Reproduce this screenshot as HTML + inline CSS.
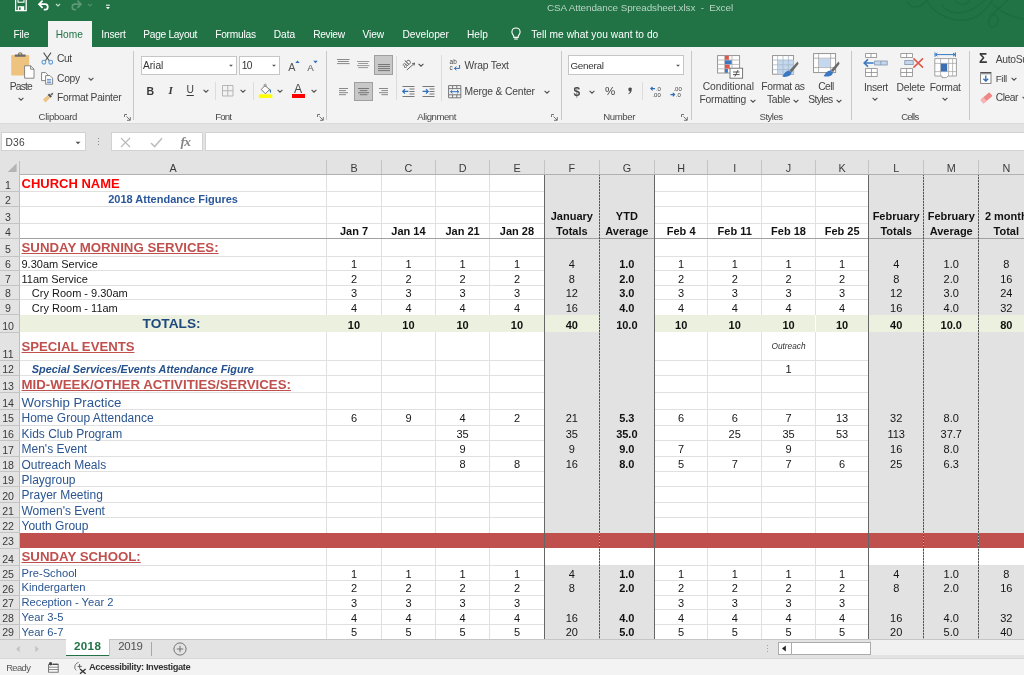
<!DOCTYPE html>
<html><head><meta charset="utf-8"><title>CSA Attendance Spreadsheet.xlsx - Excel</title>
<style>
html,body{margin:0;padding:0;}
body{width:1024px;height:675px;overflow:hidden;position:relative;background:#e3e3e3;font-family:"Liberation Sans",sans-serif;}
#grid div,#hdrs div,#hdrs svg,#cells div{position:absolute;}
#grid,#hdrs,#cells{position:absolute;left:0;top:0;width:1024px;height:675px;overflow:hidden;}
.ch{text-align:center;font-size:10.8px;color:#3a3a3a;padding-top:1px;}
.rh{font-size:10.6px;color:#3a3a3a;display:flex;align-items:flex-end;justify-content:center;}
.rh span{line-height:13px;margin-bottom:-0.5px;}
.c{font-size:11px;color:#151515;white-space:nowrap;display:flex;align-items:flex-end;box-sizing:border-box;padding:0 2px;}
.c span{display:block;width:100%;line-height:1.15;margin-bottom:0.5px;}
.c.b{font-weight:bold;color:#111;}
.c.i{font-style:italic;}
.c.two span{line-height:14.8px;margin-bottom:0;}
#top,#bottom{position:absolute;left:0;top:0;width:1024px;height:675px;overflow:hidden;pointer-events:none;}
#top div,#top svg,#bottom div,#bottom svg{position:absolute;}
.t{white-space:nowrap;}

#cells,#hdrs,#top,#bottom{will-change:transform;}

</style></head>
<body>
<div id="top">
<div style="left:0.00px;top:0.00px;width:1024.00px;height:46.60px;background:#217346;"></div>
<svg style="left:900.00px;top:0.00px;" width="124" height="47" viewBox="0 0 124 47"><g fill="none" stroke="#1d6a3f" stroke-width="1.5" opacity="0.85"><path d="M7.5 1.3 C9 8 20 10 26.5 0"/><path d="M26.5 0 C32 12 48 20 62 20.3 S86 10 92.5 0"/><path d="M41.7 4 C46 14 62 16 74.8 7.6 S82 2 85 0"/><path d="M107.8 0 C100 8 88 16 88.7 22 S95 29 97.6 23 S95 14 90 14"/><path d="M92.5 4 C100 12 112 17 124 19"/><path d="M55 0 C58 6 66 6 70 0"/></g></svg>
<div class="t" style="white-space:pre;left:547.00px;top:1.66px;font-size:9.9px;line-height:11.88px;letter-spacing:-0.068px;color:#b9d5c4;">CSA Attendance Spreadsheet.xlsx  -  Excel</div>
<div style="left:47.50px;top:21.20px;width:44.40px;height:25.60px;background:#f3f3f3;"></div>
<div class="t" style="white-space:pre;left:13.50px;top:28.88px;font-size:10.2px;line-height:12.24px;letter-spacing:-0.184px;color:#fff;">File</div>
<div class="t" style="white-space:pre;left:101.30px;top:28.88px;font-size:10.2px;line-height:12.24px;letter-spacing:-0.201px;color:#fff;">Insert</div>
<div class="t" style="white-space:pre;left:143.30px;top:28.88px;font-size:10.2px;line-height:12.24px;letter-spacing:-0.307px;color:#fff;">Page Layout</div>
<div class="t" style="white-space:pre;left:215.20px;top:28.88px;font-size:10.2px;line-height:12.24px;letter-spacing:-0.238px;color:#fff;">Formulas</div>
<div class="t" style="white-space:pre;left:273.80px;top:28.88px;font-size:10.2px;line-height:12.24px;letter-spacing:-0.086px;color:#fff;">Data</div>
<div class="t" style="white-space:pre;left:313.20px;top:28.88px;font-size:10.2px;line-height:12.24px;letter-spacing:-0.307px;color:#fff;">Review</div>
<div class="t" style="white-space:pre;left:362.50px;top:28.88px;font-size:10.2px;line-height:12.24px;letter-spacing:-0.106px;color:#fff;">View</div>
<div class="t" style="white-space:pre;left:402.40px;top:28.88px;font-size:10.2px;line-height:12.24px;letter-spacing:0.012px;color:#fff;">Developer</div>
<div class="t" style="white-space:pre;left:467.00px;top:28.88px;font-size:10.2px;line-height:12.24px;letter-spacing:-0.044px;color:#fff;">Help</div>
<div class="t" style="white-space:pre;left:531.20px;top:28.88px;font-size:10.2px;line-height:12.24px;letter-spacing:0.053px;color:#fff;">Tell me what you want to do</div>
<div class="t" style="white-space:pre;left:55.80px;top:28.88px;font-size:10.2px;line-height:12.24px;letter-spacing:-0.052px;color:#217346;">Home</div>
<div style="left:0.00px;top:46.60px;width:1024.00px;height:76.60px;background:#f3f3f3;"></div>
<div style="left:0.00px;top:123.20px;width:1024.00px;height:1.00px;background:#dadada;"></div>
<div style="left:133.30px;top:50.50px;width:1.00px;height:69.00px;background:#c8c8c8;"></div>
<div style="left:326.30px;top:50.50px;width:1.00px;height:69.00px;background:#c8c8c8;"></div>
<div style="left:560.50px;top:50.50px;width:1.00px;height:69.00px;background:#c8c8c8;"></div>
<div style="left:690.60px;top:50.50px;width:1.00px;height:69.00px;background:#c8c8c8;"></div>
<div style="left:851.00px;top:50.50px;width:1.00px;height:69.00px;background:#c8c8c8;"></div>
<div style="left:968.90px;top:50.50px;width:1.00px;height:69.00px;background:#c8c8c8;"></div>
<div style="left:215.20px;top:82.00px;width:1.00px;height:18.00px;background:#dcdcdc;"></div>
<div style="left:252.50px;top:82.00px;width:1.00px;height:18.00px;background:#dcdcdc;"></div>
<div style="left:395.70px;top:56.00px;width:1.00px;height:44.00px;background:#dcdcdc;"></div>
<div style="left:440.80px;top:55.00px;width:1.00px;height:46.00px;background:#dcdcdc;"></div>
<div style="left:642.30px;top:82.00px;width:1.00px;height:18.00px;background:#dcdcdc;"></div>
<div class="t" style="white-space:pre;left:38.60px;top:111.34px;font-size:9.6px;line-height:11.52px;letter-spacing:-0.276px;color:#4a4a4a;">Clipboard</div>
<div class="t" style="white-space:pre;left:215.20px;top:111.34px;font-size:9.6px;line-height:11.52px;letter-spacing:-0.802px;color:#4a4a4a;">Font</div>
<div class="t" style="white-space:pre;left:417.30px;top:111.34px;font-size:9.6px;line-height:11.52px;letter-spacing:-0.443px;color:#4a4a4a;">Alignment</div>
<div class="t" style="white-space:pre;left:603.30px;top:111.34px;font-size:9.6px;line-height:11.52px;letter-spacing:-0.407px;color:#4a4a4a;">Number</div>
<div class="t" style="white-space:pre;left:759.60px;top:111.34px;font-size:9.6px;line-height:11.52px;letter-spacing:-0.540px;color:#4a4a4a;">Styles</div>
<div class="t" style="white-space:pre;left:901.20px;top:111.34px;font-size:9.6px;line-height:11.52px;letter-spacing:-0.828px;color:#4a4a4a;">Cells</div>
<svg style="left:124.20px;top:113.70px;" width="7" height="7" viewBox="0 0 7 7"><path d="M0.5 3 V0.5 H3 M2.5 2.5 L6 6 M6.3 3 V6.3 H3" fill="none" stroke="#666" stroke-width="0.9"/></svg>
<svg style="left:317.20px;top:113.70px;" width="7" height="7" viewBox="0 0 7 7"><path d="M0.5 3 V0.5 H3 M2.5 2.5 L6 6 M6.3 3 V6.3 H3" fill="none" stroke="#666" stroke-width="0.9"/></svg>
<svg style="left:550.80px;top:113.70px;" width="7" height="7" viewBox="0 0 7 7"><path d="M0.5 3 V0.5 H3 M2.5 2.5 L6 6 M6.3 3 V6.3 H3" fill="none" stroke="#666" stroke-width="0.9"/></svg>
<svg style="left:681.20px;top:113.70px;" width="7" height="7" viewBox="0 0 7 7"><path d="M0.5 3 V0.5 H3 M2.5 2.5 L6 6 M6.3 3 V6.3 H3" fill="none" stroke="#666" stroke-width="0.9"/></svg>
<div class="t" style="white-space:pre;left:9.80px;top:81.32px;font-size:10.3px;line-height:12.36px;letter-spacing:-0.827px;color:#444;">Paste</div>
<svg style="left:16.60px;top:96.40px;" width="8" height="6" viewBox="0 0 8 6"><path d="M1.6 1.8 L4 4.2 L6.4 1.8" fill="none" stroke="#505050" stroke-width="1.1"/></svg>
<div class="t" style="white-space:pre;left:57.00px;top:53.12px;font-size:10.3px;line-height:12.36px;letter-spacing:-0.509px;color:#444;">Cut</div>
<div class="t" style="white-space:pre;left:57.00px;top:72.82px;font-size:10.3px;line-height:12.36px;letter-spacing:-0.311px;color:#444;">Copy</div>
<svg style="left:87.30px;top:75.50px;" width="8" height="6" viewBox="0 0 8 6"><path d="M1.6 1.8 L4 4.2 L6.4 1.8" fill="none" stroke="#505050" stroke-width="1.1"/></svg>
<div class="t" style="white-space:pre;left:57.00px;top:92.42px;font-size:10.3px;line-height:12.36px;letter-spacing:-0.272px;color:#444;">Format Painter</div>
<div style="left:141.30px;top:55.80px;width:95.80px;height:18.80px;background:#fff;border:1px solid #c6c6c6;box-sizing:border-box;"></div>
<div style="left:239.30px;top:55.80px;width:41.00px;height:18.80px;background:#fff;border:1px solid #c6c6c6;box-sizing:border-box;"></div>
<div class="t" style="white-space:pre;left:142.90px;top:60.48px;font-size:10.2px;line-height:12.24px;letter-spacing:0.019px;color:#333;">Arial</div>
<div class="t" style="white-space:pre;left:241.80px;top:60.48px;font-size:10.2px;line-height:12.24px;letter-spacing:-0.672px;color:#333;">10</div>
<svg style="left:227.00px;top:62.80px;" width="8" height="6" viewBox="0 0 8 6"><path d="M2.1 1.8 L5.9 1.8 L4 3.7 Z" fill="#555"/></svg>
<svg style="left:270.30px;top:62.80px;" width="8" height="6" viewBox="0 0 8 6"><path d="M2.1 1.8 L5.9 1.8 L4 3.7 Z" fill="#555"/></svg>
<div class="t" style="white-space:pre;left:288.20px;top:60.52px;font-size:10.8px;line-height:12.96px;letter-spacing:1.196px;color:#555;">A</div>
<svg style="left:295.00px;top:60.00px;" width="5" height="4" viewBox="0 0 5 4"><path d="M0.3 3 L2.5 0.6 L4.7 3 Z" fill="#2b6cb8"/></svg>
<div class="t" style="white-space:pre;left:307.20px;top:61.52px;font-size:9.8px;line-height:11.76px;letter-spacing:1.063px;color:#555;">A</div>
<svg style="left:313.40px;top:60.20px;" width="5" height="4" viewBox="0 0 5 4"><path d="M0.3 0.8 L2.5 3.2 L4.7 0.8 Z" fill="#2b6cb8"/></svg>
<div class="t" style="white-space:pre;left:146.40px;top:84.60px;font-size:10.5px;line-height:12.60px;letter-spacing:-1.183px;color:#3b3b3b;font-weight:bold;">B</div>
<div class="t" style="left:168.4px;top:84.3px;font-size:11px;line-height:13.2px;font-family:'Liberation Serif',serif;font-style:italic;font-weight:bold;color:#3b3b3b;">I</div>
<div class="t" style="white-space:pre;left:186.60px;top:84.22px;font-size:10.3px;line-height:12.36px;letter-spacing:-0.239px;color:#3b3b3b;text-decoration:underline;text-underline-offset:1.5px;">U</div>
<svg style="left:201.50px;top:88.30px;" width="8" height="6" viewBox="0 0 8 6"><path d="M1.6 1.8 L4 4.2 L6.4 1.8" fill="none" stroke="#505050" stroke-width="1.1"/></svg>
<svg style="left:222.30px;top:85.00px;" width="12" height="12" viewBox="0 0 12 12"><path d="M0.5 0.5 H11 V11 H0.5 Z M5.75 0.5 V11 M0.5 5.75 H11" fill="none" stroke="#b5b5b5" stroke-width="1"/></svg>
<svg style="left:239.00px;top:88.30px;" width="8" height="6" viewBox="0 0 8 6"><path d="M1.6 1.8 L4 4.2 L6.4 1.8" fill="none" stroke="#505050" stroke-width="1.1"/></svg>
<svg style="left:258.00px;top:83.00px;" width="16" height="16" viewBox="0 0 16 16"><rect x="0.8" y="11.3" width="13.5" height="3.6" fill="#ffff00"/><path d="M3.2 6.4 L7 2.6 L11.6 6.6 L7.4 10.8 Z" fill="#fff" stroke="#666" stroke-width="0.9" stroke-linejoin="round"/><circle cx="7.2" cy="2.3" r="1.2" fill="none" stroke="#777" stroke-width="0.7"/><path d="M11.4 5.6 C13 6.6 13.6 8.4 12.6 10.2 C11.8 9 11.4 7.4 11.4 5.6Z" fill="#2b6cb8"/></svg>
<svg style="left:276.30px;top:88.30px;" width="8" height="6" viewBox="0 0 8 6"><path d="M1.6 1.8 L4 4.2 L6.4 1.8" fill="none" stroke="#505050" stroke-width="1.1"/></svg>
<div class="t" style="white-space:pre;left:294.10px;top:81.98px;font-size:12.2px;line-height:14.64px;letter-spacing:0.162px;color:#4a4a4a;">A</div>
<div style="left:291.80px;top:94.30px;width:13.30px;height:3.60px;background:#ff0000;"></div>
<svg style="left:309.60px;top:88.30px;" width="8" height="6" viewBox="0 0 8 6"><path d="M1.6 1.8 L4 4.2 L6.4 1.8" fill="none" stroke="#505050" stroke-width="1.1"/></svg>
<svg style="left:14.50px;top:0.00px;overflow:hidden;" width="12" height="12" viewBox="0 0 12 12"><path d="M0.6 -2 H11.2 V10.6 H0.6 Z" fill="none" stroke="#fff" stroke-width="1.3"/><rect x="3" y="-2" width="6" height="4.2" fill="none" stroke="#fff" stroke-width="1.1"/><rect x="2.8" y="6.2" width="6.4" height="4.4" fill="#fff"/><rect x="4" y="7.4" width="1.6" height="2.4" fill="#217346"/></svg>
<svg style="left:37.00px;top:0.00px;" width="14" height="12" viewBox="0 0 14 12"><path d="M2 4.2 H8.2 C11.6 4.2 11.6 9.6 8.2 9.6 H6.8" fill="none" stroke="#fff" stroke-width="1.7"/><path d="M5.6 0.6 L2 4.2 L5.6 7.8" fill="none" stroke="#fff" stroke-width="1.7"/></svg>
<svg style="left:54.00px;top:2.20px;" width="8" height="6" viewBox="0 0 8 6"><path d="M2 2.0 L4 4.0 L6 2.0" fill="none" stroke="#c5dccd" stroke-width="1.1"/></svg>
<svg style="left:69.00px;top:0.00px;" width="14" height="12" viewBox="0 0 14 12"><path d="M12 4.2 H5.8 C2.4 4.2 2.4 9.6 5.8 9.6 H7.2" fill="none" stroke="#5d9976" stroke-width="1.7"/><path d="M8.4 0.6 L12 4.2 L8.4 7.8" fill="none" stroke="#5d9976" stroke-width="1.7"/></svg>
<svg style="left:86.00px;top:2.20px;" width="8" height="6" viewBox="0 0 8 6"><path d="M2 2.0 L4 4.0 L6 2.0" fill="none" stroke="#4f8f6a" stroke-width="1.1"/></svg>
<svg style="left:105.00px;top:4.00px;" width="6" height="7" viewBox="0 0 6 7"><path d="M1 1.2 H4.8" stroke="#fff" stroke-width="1"/><path d="M0.9 2.9 H4.9 L2.9 5.2 Z" fill="#fff"/></svg>
<svg style="left:510.50px;top:27.00px;" width="10" height="14" viewBox="0 0 10 14"><path d="M5 1 C2.4 1 0.9 3 0.9 5 C0.9 6.8 2.2 7.8 2.8 9.2 V10.4 H7.2 V9.2 C7.8 7.8 9.1 6.8 9.1 5 C9.1 3 7.6 1 5 1 Z" fill="none" stroke="#fff" stroke-width="1.1"/><path d="M3.2 12 H6.8" stroke="#fff" stroke-width="1.1"/></svg>
<svg style="left:10.00px;top:51.00px;" width="26" height="29" viewBox="0 0 26 29"><rect x="1.2" y="4" width="18" height="20.6" rx="1" fill="#eec37f"/><path d="M4.8 5.8 V3.4 H8 C8 0.6 12.4 0.6 12.4 3.4 H15.6 V5.8 Z" fill="#6b6b6b"/><rect x="9.2" y="2.2" width="2" height="1.3" fill="#eec37f"/><path d="M14.6 14.8 H20.6 L24 18.2 V27.2 H14.6 Z" fill="#fff" stroke="#7a7a7a" stroke-width="0.9"/><path d="M20.6 14.8 V18.2 H24" fill="none" stroke="#7a7a7a" stroke-width="0.9"/></svg>
<svg style="left:41.00px;top:52.00px;" width="13" height="13" viewBox="0 0 13 13"><path d="M2.6 0.6 L8.6 9.2 M10 0.6 L4 9.2" stroke="#555" stroke-width="1.1" fill="none"/><circle cx="2.9" cy="10.2" r="1.9" fill="none" stroke="#5b9bd5" stroke-width="1.1"/><circle cx="9.7" cy="10.2" r="1.9" fill="none" stroke="#5b9bd5" stroke-width="1.1"/></svg>
<svg style="left:41.00px;top:72.00px;" width="13" height="13" viewBox="0 0 13 13"><path d="M0.6 0.6 H4.6 L6.6 2.6 V8.6 H0.6 Z" fill="#fff" stroke="#777" stroke-width="0.9"/><path d="M4.6 3.6 H9 L11.6 6.2 V12.2 H4.6 Z" fill="#fff" stroke="#777" stroke-width="0.9"/><path d="M6 7.4 H10.2 M6 9 H10.2 M6 10.6 H10.2" stroke="#3a78c2" stroke-width="0.8"/></svg>
<svg style="left:41.50px;top:91.50px;" width="13" height="11" viewBox="0 0 13 11"><path d="M1 7.6 L5.4 3.4 L8 6 L3.4 10.4 Z" fill="#eec37f"/><path d="M5.6 3 L8.4 5.8 L10 4.2 L7.2 1.4 Z" fill="#555"/><path d="M8.4 2 L11.4 0.6 L10.2 3.6" fill="#555"/></svg>
<div style="left:374.20px;top:55.40px;width:18.60px;height:19.50px;background:#c8c8c8;border:1px solid #9f9f9f;box-sizing:border-box;"></div>
<div style="left:354.20px;top:82.00px;width:18.60px;height:19.20px;background:#c8c8c8;border:1px solid #9f9f9f;box-sizing:border-box;"></div>
<svg style="left:337.10px;top:58.90px;" width="12.6" height="8.1" viewBox="0 0 12.6 8.1"><path d="M0.0 0.5 H12.6" stroke="#7d7d7d" stroke-width="0.9"/><path d="M0.8 2.5 H11.8" stroke="#7d7d7d" stroke-width="0.9"/><path d="M0.0 4.6 H12.6" stroke="#7d7d7d" stroke-width="0.9"/></svg>
<svg style="left:357.30px;top:61.30px;" width="12.3" height="10.1" viewBox="0 0 12.3 10.1"><path d="M0.0 0.5 H12.3" stroke="#8f8f8f" stroke-width="0.9"/><path d="M1.2 2.5 H11.1" stroke="#8f8f8f" stroke-width="0.9"/><path d="M0.0 4.6 H12.3" stroke="#8f8f8f" stroke-width="0.9"/><path d="M1.2 6.6 H11.1" stroke="#8f8f8f" stroke-width="0.9"/></svg>
<svg style="left:377.80px;top:63.90px;" width="12.1" height="10.1" viewBox="0 0 12.1 10.1"><path d="M0.0 0.5 H12.1" stroke="#6e6e6e" stroke-width="0.9"/><path d="M0.0 2.5 H12.1" stroke="#6e6e6e" stroke-width="0.9"/><path d="M0.0 4.6 H12.1" stroke="#6e6e6e" stroke-width="0.9"/><path d="M0.0 6.6 H12.1" stroke="#6e6e6e" stroke-width="0.9"/></svg>
<svg style="left:338.50px;top:87.60px;" width="9.4" height="10.3" viewBox="0 0 9.4 10.3"><path d="M0.0 0.5 H9.4" stroke="#7d7d7d" stroke-width="0.9"/><path d="M0.0 2.6 H7.0" stroke="#7d7d7d" stroke-width="0.9"/><path d="M0.0 4.7 H9.4" stroke="#7d7d7d" stroke-width="0.9"/><path d="M0.0 6.7 H7.0" stroke="#7d7d7d" stroke-width="0.9"/></svg>
<svg style="left:357.90px;top:87.60px;" width="11.1" height="10.3" viewBox="0 0 11.1 10.3"><path d="M0.0 0.5 H11.1" stroke="#6e6e6e" stroke-width="0.9"/><path d="M1.7 2.6 H9.4" stroke="#6e6e6e" stroke-width="0.9"/><path d="M0.0 4.7 H11.1" stroke="#6e6e6e" stroke-width="0.9"/><path d="M1.7 6.7 H9.4" stroke="#6e6e6e" stroke-width="0.9"/></svg>
<svg style="left:378.80px;top:87.60px;" width="9.6" height="10.3" viewBox="0 0 9.6 10.3"><path d="M0.0 0.5 H9.6" stroke="#7d7d7d" stroke-width="0.9"/><path d="M2.4 2.6 H9.6" stroke="#7d7d7d" stroke-width="0.9"/><path d="M0.0 4.7 H9.6" stroke="#7d7d7d" stroke-width="0.9"/><path d="M2.4 6.7 H9.6" stroke="#7d7d7d" stroke-width="0.9"/></svg>
<svg style="left:401.00px;top:56.00px;" width="16" height="16" viewBox="0 0 16 16"><text x="5.6" y="7.6" text-anchor="middle" font-size="8.6" font-family="Liberation Sans" fill="#555" transform="rotate(-45 5.6 7.6) translate(0 2.6)">ab</text><path d="M5.8 14 L13.6 7.2 M13.6 7.2 L11.2 7.6 M13.6 7.2 L13 9.6" stroke="#555" stroke-width="0.9" fill="none"/></svg>
<svg style="left:417.30px;top:62.00px;" width="8" height="6" viewBox="0 0 8 6"><path d="M1.6 1.8 L4 4.2 L6.4 1.8" fill="none" stroke="#505050" stroke-width="1.1"/></svg>
<svg style="left:401.80px;top:86.00px;" width="13" height="11" viewBox="0 0 13 11"><path d="M0.5 0.5 H12.5 M7.5 3 H12.5 M7.5 5.5 H12.5 M7.5 8 H12.5 M0.5 10.5 H12.5" stroke="#6a6a6a" stroke-width="0.9"/><g transform="translate(0,2.2)"><path d="M6.4 3.2 H0.8 M3 1 L0.8 3.2 L3 5.4" stroke="#2b6cb8" stroke-width="1.2" fill="none"/></g></svg>
<svg style="left:422.00px;top:86.00px;" width="13" height="11" viewBox="0 0 13 11"><path d="M0.5 0.5 H12.5 M7.5 3 H12.5 M7.5 5.5 H12.5 M7.5 8 H12.5 M0.5 10.5 H12.5" stroke="#6a6a6a" stroke-width="0.9"/><g transform="translate(0,2.2)"><path d="M0.6 3.2 H6.2 M4 1 L6.2 3.2 L4 5.4" stroke="#2b6cb8" stroke-width="1.2" fill="none"/></g></svg>
<svg style="left:449.30px;top:58.50px;" width="12" height="13" viewBox="0 0 12 13"><text x="0.6" y="5.4" font-size="6.4" font-family="Liberation Sans" fill="#444">ab</text><text x="0.6" y="11.4" font-size="6.4" font-family="Liberation Sans" fill="#444">c</text><path d="M10.6 6 V9.4 H5.6 M7.4 7.6 L5.4 9.4 L7.4 11.2" stroke="#2b6cb8" stroke-width="1" fill="none"/></svg>
<div class="t" style="white-space:pre;left:464.60px;top:60.22px;font-size:10.3px;line-height:12.36px;letter-spacing:-0.198px;color:#444;">Wrap Text</div>
<svg style="left:448.00px;top:84.50px;" width="14" height="14" viewBox="0 0 14 14"><path d="M0.6 0.6 H12.8 V12.8 H0.6 Z M0.6 3.6 H12.8 M0.6 9.8 H12.8 M4.6 0.6 V3.6 M8.8 0.6 V3.6 M4.6 9.8 V12.8 M8.8 9.8 V12.8" fill="none" stroke="#6a6a6a" stroke-width="0.9"/><path d="M2.6 6.7 H10.8 M4.4 5 L2.6 6.7 L4.4 8.4 M9 5 L10.8 6.7 L9 8.4" stroke="#2b6cb8" stroke-width="1" fill="none"/></svg>
<div class="t" style="white-space:pre;left:464.60px;top:86.12px;font-size:10.3px;line-height:12.36px;letter-spacing:-0.171px;color:#444;">Merge &amp; Center</div>
<svg style="left:543.00px;top:88.50px;" width="8" height="6" viewBox="0 0 8 6"><path d="M1.6 1.8 L4 4.2 L6.4 1.8" fill="none" stroke="#505050" stroke-width="1.1"/></svg>
<div style="left:568.30px;top:55.40px;width:116.20px;height:19.50px;background:#fff;border:1px solid #c6c6c6;box-sizing:border-box;"></div>
<div class="t" style="white-space:pre;left:570.40px;top:60.46px;font-size:9.9px;line-height:11.88px;letter-spacing:-0.260px;color:#333;">General</div>
<svg style="left:674.30px;top:62.80px;" width="8" height="6" viewBox="0 0 8 6"><path d="M2.1 1.8 L5.9 1.8 L4 3.7 Z" fill="#555"/></svg>
<div class="t" style="white-space:pre;left:573.60px;top:85.00px;font-size:12px;line-height:14.40px;letter-spacing:0.727px;color:#4a4a4a;font-weight:bold;">$</div>
<svg style="left:588.30px;top:88.50px;" width="8" height="6" viewBox="0 0 8 6"><path d="M1.6 1.8 L4 4.2 L6.4 1.8" fill="none" stroke="#505050" stroke-width="1.1"/></svg>
<div class="t" style="white-space:pre;left:605.00px;top:85.30px;font-size:11.5px;line-height:13.80px;letter-spacing:0.074px;color:#444;">%</div>
<svg style="left:627.00px;top:86.50px;" width="6" height="9" viewBox="0 0 6 9"><path d="M1.4 2.4 A1.7 1.7 0 1 1 4.7 2.6 C4.7 5 3.4 6.6 1.5 7.2 L1.3 6.5 C2.3 6 2.9 5.3 3 4.2 C2 4.3 1.4 3.4 1.4 2.4 Z" fill="#4a4a4a"/></svg>
<svg style="left:649.50px;top:85.50px;" width="12" height="12" viewBox="0 0 12 12"><path d="M5 2.6 H0.8 M2.6 0.8 L0.8 2.6 L2.6 4.4" stroke="#2b6cb8" stroke-width="1.1" fill="none"/><text x="5.8" y="4.8" font-size="6" font-family="Liberation Sans" fill="#444">.0</text><text x="2.4" y="10.6" font-size="6" font-family="Liberation Sans" fill="#444">.00</text></svg>
<svg style="left:669.50px;top:85.50px;" width="12" height="12" viewBox="0 0 12 12"><text x="3.4" y="4.8" font-size="6" font-family="Liberation Sans" fill="#444">.00</text><path d="M0.4 8.6 H4.6 M2.8 6.8 L4.6 8.6 L2.8 10.4" stroke="#2b6cb8" stroke-width="1.1" fill="none"/><text x="5.8" y="10.6" font-size="6" font-family="Liberation Sans" fill="#444">.0</text></svg>
<svg style="left:717.00px;top:55.00px;" width="27" height="25" viewBox="0 0 27 25"><rect x="0.6" y="0.6" width="22" height="17.4" fill="#fff" stroke="#8a8a8a" stroke-width="0.9"/><path d="M0.6 5 H22.6 M0.6 9.4 H22.6 M0.6 13.8 H22.6 M7.6 0.6 V18 M15 0.6 V18" stroke="#b0b0b0" stroke-width="0.8"/><rect x="7.9" y="0.8" width="4" height="4" fill="#e0584b"/><rect x="7.9" y="5.3" width="6.8" height="3.9" fill="#3a78c2"/><rect x="7.9" y="9.7" width="4.8" height="3.9" fill="#e0584b"/><rect x="7.9" y="14" width="3" height="3.8" fill="#3a78c2"/><rect x="13" y="13.2" width="12.6" height="10" fill="#fff" stroke="#6a6a6a" stroke-width="0.9"/><path d="M16 17 H22.6 M16 19.6 H22.6 M21 15 L17.8 21.6" stroke="#444" stroke-width="0.9"/></svg>
<div class="t" style="white-space:pre;left:702.70px;top:80.82px;font-size:10.3px;line-height:12.36px;letter-spacing:-0.021px;color:#444;">Conditional</div>
<div class="t" style="white-space:pre;left:699.50px;top:94.02px;font-size:10.3px;line-height:12.36px;letter-spacing:-0.272px;color:#444;">Formatting</div>
<svg style="left:748.60px;top:97.60px;" width="8" height="6" viewBox="0 0 8 6"><path d="M1.6 1.8 L4 4.2 L6.4 1.8" fill="none" stroke="#505050" stroke-width="1.1"/></svg>
<svg style="left:771.50px;top:55.00px;" width="27" height="25" viewBox="0 0 27 25"><rect x="0.6" y="0.6" width="21" height="18.6" fill="#fff" stroke="#8a8a8a" stroke-width="0.9"/><rect x="5.6" y="5" width="16" height="14.2" fill="#c3d8ee"/><path d="M0.6 5 H21.6 M0.6 9.8 H21.6 M0.6 14.6 H21.6 M5.6 0.6 V19.2 M11 0.6 V19.2 M16.4 0.6 V19.2" stroke="#a8b8c8" stroke-width="0.8"/><path d="M25.6 6.6 L17.4 15.4 L19.6 17.4 L26.6 8.8 Z" fill="#6b6b6b"/><path d="M17.2 15.8 C14 15.6 12.6 18 10.2 21.6 C14 22.4 19 21.6 19.6 17.6 Z" fill="#3a78c2"/></svg>
<div class="t" style="white-space:pre;left:761.30px;top:80.82px;font-size:10.3px;line-height:12.36px;letter-spacing:-0.340px;color:#444;">Format as</div>
<div class="t" style="white-space:pre;left:766.90px;top:94.02px;font-size:10.3px;line-height:12.36px;letter-spacing:-0.264px;color:#444;">Table</div>
<svg style="left:792.20px;top:97.60px;" width="8" height="6" viewBox="0 0 8 6"><path d="M1.6 1.8 L4 4.2 L6.4 1.8" fill="none" stroke="#505050" stroke-width="1.1"/></svg>
<svg style="left:813.20px;top:53.00px;" width="27" height="27" viewBox="0 0 27 27"><rect x="0.6" y="0.6" width="22" height="19" fill="#fff" stroke="#8a8a8a" stroke-width="0.9"/><path d="M0.6 5.2 H22.6 M0.6 14.6 H22.6 M5.6 0.6 V19.6 M17.6 0.6 V19.6" stroke="#a0a0a0" stroke-width="0.8"/><rect x="6" y="5.6" width="11.2" height="8.6" fill="#c3d8ee"/><path d="M25.6 8.6 L17.8 17.2 L20 19.2 L26.6 10.8 Z" fill="#6b6b6b"/><path d="M17.6 17.6 C14.4 17.4 13 19.6 10.6 23.2 C14.4 24 19.4 23.4 20 19.4 Z" fill="#3a78c2"/></svg>
<div class="t" style="white-space:pre;left:818.20px;top:80.82px;font-size:10.3px;line-height:12.36px;letter-spacing:-0.561px;color:#444;">Cell</div>
<div class="t" style="white-space:pre;left:808.20px;top:94.02px;font-size:10.3px;line-height:12.36px;letter-spacing:-0.608px;color:#444;">Styles</div>
<svg style="left:834.60px;top:97.60px;" width="8" height="6" viewBox="0 0 8 6"><path d="M1.6 1.8 L4 4.2 L6.4 1.8" fill="none" stroke="#505050" stroke-width="1.1"/></svg>
<svg style="left:862.50px;top:53.00px;" width="26" height="25" viewBox="0 0 26 25"><rect x="2.6" y="0.6" width="11" height="3.8" fill="#fff" stroke="#8a8a8a" stroke-width="0.8"/><path d="M8 0.6 V4.4" stroke="#8a8a8a" stroke-width="0.8"/><rect x="11.6" y="8" width="12.6" height="4" fill="#c3d8ee" stroke="#7f95ad" stroke-width="0.8"/><path d="M17.8 8 V12" stroke="#7f95ad" stroke-width="0.8"/><path d="M10.6 10 H1.2 M5 6.4 L1.2 10 L5 13.6" stroke="#3a78c2" stroke-width="1.6" fill="none"/><rect x="2.6" y="15.6" width="11.6" height="7.8" fill="#fff" stroke="#8a8a8a" stroke-width="0.8"/><path d="M2.6 19.5 H14.2 M8.4 15.6 V23.4" stroke="#8a8a8a" stroke-width="0.8"/></svg>
<div class="t" style="white-space:pre;left:864.00px;top:82.02px;font-size:10.3px;line-height:12.36px;letter-spacing:-0.326px;color:#444;">Insert</div>
<svg style="left:871.30px;top:96.30px;" width="8" height="6" viewBox="0 0 8 6"><path d="M1.6 1.8 L4 4.2 L6.4 1.8" fill="none" stroke="#505050" stroke-width="1.1"/></svg>
<svg style="left:899.50px;top:53.00px;" width="26" height="25" viewBox="0 0 26 25"><rect x="0.8" y="0.6" width="11.6" height="3.8" fill="#fff" stroke="#8a8a8a" stroke-width="0.8"/><path d="M6.6 0.6 V4.4" stroke="#8a8a8a" stroke-width="0.8"/><rect x="4.8" y="7.6" width="8.4" height="4" fill="#c3d8ee" stroke="#7f95ad" stroke-width="0.8"/><path d="M13.4 5.4 L23 14.6 M23 5.4 L13.4 14.6" stroke="#e0584b" stroke-width="1.5"/><rect x="0.8" y="15.6" width="11.6" height="7.8" fill="#fff" stroke="#8a8a8a" stroke-width="0.8"/><path d="M0.8 19.5 H12.4 M6.6 15.6 V23.4" stroke="#8a8a8a" stroke-width="0.8"/></svg>
<div class="t" style="white-space:pre;left:896.40px;top:82.02px;font-size:10.3px;line-height:12.36px;letter-spacing:-0.195px;color:#444;">Delete</div>
<svg style="left:906.00px;top:96.30px;" width="8" height="6" viewBox="0 0 8 6"><path d="M1.6 1.8 L4 4.2 L6.4 1.8" fill="none" stroke="#505050" stroke-width="1.1"/></svg>
<svg style="left:934.00px;top:52.00px;" width="25" height="27" viewBox="0 0 25 27"><path d="M1 2.6 H21.4 M1 0.4 V4.8 M21.4 0.4 V4.8 M3.4 1 L1.4 2.6 L3.4 4.2 M19 1 L21 2.6 L19 4.2" stroke="#3a78c2" stroke-width="1" fill="none"/><path d="M0.8 6.6 H22.4 V24 H14 L12.4 25.6 H8 V24 H0.8 Z" fill="#fff" stroke="#8a8a8a" stroke-width="0.8"/><path d="M0.8 11.4 H22.4 M0.8 19.6 H22.4 M6.6 6.6 V24 M14.6 6.6 V24 M18.6 6.6 V24" stroke="#a0a0a0" stroke-width="0.7"/><rect x="6.8" y="11.6" width="6.4" height="7.8" fill="#3a6fb5"/></svg>
<div class="t" style="white-space:pre;left:929.70px;top:82.02px;font-size:10.3px;line-height:12.36px;letter-spacing:-0.270px;color:#444;">Format</div>
<svg style="left:941.20px;top:96.30px;" width="8" height="6" viewBox="0 0 8 6"><path d="M1.6 1.8 L4 4.2 L6.4 1.8" fill="none" stroke="#505050" stroke-width="1.1"/></svg>
<div class="t" style="left:979.4px;top:49.4px;font-size:15px;line-height:18px;color:#3a3a3a;font-weight:bold;transform:scaleX(0.92);transform-origin:0 0;">&Sigma;</div>
<div class="t" style="white-space:pre;left:995.70px;top:53.82px;font-size:10.3px;line-height:12.36px;letter-spacing:-0.295px;color:#444;">AutoSum</div>
<svg style="left:979.50px;top:72.00px;" width="12" height="12" viewBox="0 0 12 12"><rect x="0.6" y="1.8" width="10.4" height="9.6" fill="#fff" stroke="#777" stroke-width="0.9"/><path d="M0.2 0.6 H11.4" stroke="#555" stroke-width="1.2"/><path d="M5.8 3.4 V9 M3.4 6.8 L5.8 9.2 L8.2 6.8" stroke="#2b6cb8" stroke-width="1.3" fill="none"/></svg>
<div class="t" style="white-space:pre;left:995.70px;top:72.52px;font-size:9.8px;line-height:11.76px;letter-spacing:-0.304px;color:#444;">Fill</div>
<svg style="left:1009.60px;top:75.50px;" width="8" height="6" viewBox="0 0 8 6"><path d="M1.6 1.8 L4 4.2 L6.4 1.8" fill="none" stroke="#505050" stroke-width="1.1"/></svg>
<svg style="left:979.50px;top:91.50px;" width="13" height="12" viewBox="0 0 13 12"><g transform="rotate(-40 6.5 6)"><rect x="0.6" y="3.4" width="11.8" height="5" rx="0.9" fill="#f08585"/><rect x="0.6" y="3.4" width="4.2" height="5" rx="0.9" fill="#f6b4b4"/></g></svg>
<div class="t" style="white-space:pre;left:995.70px;top:92.22px;font-size:10.3px;line-height:12.36px;letter-spacing:-0.482px;color:#444;">Clear</div>
<svg style="left:1020.60px;top:94.80px;" width="8" height="6" viewBox="0 0 8 6"><path d="M1.6 1.8 L4 4.2 L6.4 1.8" fill="none" stroke="#505050" stroke-width="1.1"/></svg>
<div style="left:0.00px;top:124.20px;width:1024.00px;height:28.00px;background:#e3e3e3;"></div>
<div style="left:1.00px;top:132.40px;width:84.80px;height:19.00px;background:#fff;border:1px solid #d2d2d2;box-sizing:border-box;"></div>
<div class="t" style="white-space:pre;left:5.60px;top:137.48px;font-size:10.2px;line-height:12.24px;letter-spacing:0.163px;color:#444;">D36</div>
<svg style="left:73.50px;top:140.00px;" width="8" height="6" viewBox="0 0 8 6"><path d="M1.5 1.8 L6.5 1.8 L4 4.3 Z" fill="#555"/></svg>
<div style="left:98.00px;top:138.20px;width:1.20px;height:1.20px;background:#8a8a8a;"></div>
<div style="left:98.00px;top:141.20px;width:1.20px;height:1.20px;background:#8a8a8a;"></div>
<div style="left:98.00px;top:144.20px;width:1.20px;height:1.20px;background:#8a8a8a;"></div>
<div style="left:110.80px;top:132.40px;width:91.80px;height:19.00px;background:#fff;border:1px solid #d2d2d2;box-sizing:border-box;"></div>
<svg style="left:120.40px;top:137.00px;" width="11" height="11" viewBox="0 0 11 11"><path d="M1 1 L10 10 M10 1 L1 10" stroke="#b9b9b9" stroke-width="1.1"/></svg>
<svg style="left:150.00px;top:137.00px;" width="13" height="11" viewBox="0 0 13 11"><path d="M1 6 L4.6 9.6 L12 1.2" stroke="#bdbdbd" stroke-width="1.5" fill="none"/></svg>
<div class="t" style="left:180.4px;top:133.6px;font-size:13.5px;line-height:16px;font-family:Liberation Serif,serif;font-style:italic;font-weight:bold;color:#858585;letter-spacing:-0.6px;">fx</div>
<div style="left:204.50px;top:132.40px;width:822.00px;height:19.00px;background:#fff;border:1px solid #d2d2d2;box-sizing:border-box;"></div>
</div>
<div id="grid">
<div style="left:19.50px;top:174.30px;width:1004.50px;height:464.70px;background:#fff;"></div>
<div style="left:544.40px;top:174.30px;width:54.90px;height:358.50px;background:#e2e2e2;"></div>
<div style="left:544.40px;top:565.40px;width:54.90px;height:73.60px;background:#e2e2e2;"></div>
<div style="left:599.30px;top:174.30px;width:55.10px;height:358.50px;background:#e2e2e2;"></div>
<div style="left:599.30px;top:565.40px;width:55.10px;height:73.60px;background:#e2e2e2;"></div>
<div style="left:868.70px;top:174.30px;width:55.00px;height:358.50px;background:#e2e2e2;"></div>
<div style="left:868.70px;top:565.40px;width:55.00px;height:73.60px;background:#e2e2e2;"></div>
<div style="left:923.70px;top:174.30px;width:55.10px;height:358.50px;background:#e2e2e2;"></div>
<div style="left:923.70px;top:565.40px;width:55.10px;height:73.60px;background:#e2e2e2;"></div>
<div style="left:978.80px;top:174.30px;width:55.00px;height:358.50px;background:#e2e2e2;"></div>
<div style="left:978.80px;top:565.40px;width:55.00px;height:73.60px;background:#e2e2e2;"></div>
<div style="left:19.50px;top:314.60px;width:307.20px;height:17.50px;background:#ebf1de;"></div>
<div style="left:326.70px;top:314.60px;width:54.60px;height:17.50px;background:#ebf1de;"></div>
<div style="left:381.30px;top:314.60px;width:54.30px;height:17.50px;background:#ebf1de;"></div>
<div style="left:435.60px;top:314.60px;width:54.00px;height:17.50px;background:#ebf1de;"></div>
<div style="left:489.60px;top:314.60px;width:54.80px;height:17.50px;background:#ebf1de;"></div>
<div style="left:544.40px;top:314.60px;width:54.90px;height:17.50px;background:#ebf1de;"></div>
<div style="left:654.40px;top:314.60px;width:53.50px;height:17.50px;background:#ebf1de;"></div>
<div style="left:707.90px;top:314.60px;width:53.70px;height:17.50px;background:#ebf1de;"></div>
<div style="left:761.60px;top:314.60px;width:53.90px;height:17.50px;background:#ebf1de;"></div>
<div style="left:815.50px;top:314.60px;width:53.20px;height:17.50px;background:#ebf1de;"></div>
<div style="left:868.70px;top:314.60px;width:55.00px;height:17.50px;background:#ebf1de;"></div>
<div style="left:923.70px;top:314.60px;width:55.10px;height:17.50px;background:#ebf1de;"></div>
<div style="left:978.80px;top:314.60px;width:55.00px;height:17.50px;background:#ebf1de;"></div>
<div style="left:19.50px;top:532.80px;width:1004.50px;height:15.20px;background:#c0504d;"></div>
<div style="left:19.50px;top:191.10px;width:524.90px;height:1.00px;background:#e0e0e0;"></div>
<div style="left:654.40px;top:191.10px;width:214.30px;height:1.00px;background:#e0e0e0;"></div>
<div style="left:19.50px;top:205.70px;width:524.90px;height:1.00px;background:#e0e0e0;"></div>
<div style="left:654.40px;top:205.70px;width:214.30px;height:1.00px;background:#e0e0e0;"></div>
<div style="left:19.50px;top:222.90px;width:524.90px;height:1.00px;background:#e0e0e0;"></div>
<div style="left:654.40px;top:222.90px;width:214.30px;height:1.00px;background:#e0e0e0;"></div>
<div style="left:19.50px;top:237.70px;width:524.90px;height:1.00px;background:#e0e0e0;"></div>
<div style="left:654.40px;top:237.70px;width:214.30px;height:1.00px;background:#e0e0e0;"></div>
<div style="left:19.50px;top:255.50px;width:524.90px;height:1.00px;background:#e0e0e0;"></div>
<div style="left:654.40px;top:255.50px;width:214.30px;height:1.00px;background:#e0e0e0;"></div>
<div style="left:19.50px;top:270.10px;width:524.90px;height:1.00px;background:#e0e0e0;"></div>
<div style="left:654.40px;top:270.10px;width:214.30px;height:1.00px;background:#e0e0e0;"></div>
<div style="left:19.50px;top:284.90px;width:524.90px;height:1.00px;background:#e0e0e0;"></div>
<div style="left:654.40px;top:284.90px;width:214.30px;height:1.00px;background:#e0e0e0;"></div>
<div style="left:19.50px;top:299.10px;width:524.90px;height:1.00px;background:#e0e0e0;"></div>
<div style="left:654.40px;top:299.10px;width:214.30px;height:1.00px;background:#e0e0e0;"></div>
<div style="left:19.50px;top:360.10px;width:524.90px;height:1.00px;background:#e0e0e0;"></div>
<div style="left:654.40px;top:360.10px;width:214.30px;height:1.00px;background:#e0e0e0;"></div>
<div style="left:19.50px;top:374.90px;width:524.90px;height:1.00px;background:#e0e0e0;"></div>
<div style="left:654.40px;top:374.90px;width:214.30px;height:1.00px;background:#e0e0e0;"></div>
<div style="left:19.50px;top:392.20px;width:524.90px;height:1.00px;background:#e0e0e0;"></div>
<div style="left:654.40px;top:392.20px;width:214.30px;height:1.00px;background:#e0e0e0;"></div>
<div style="left:19.50px;top:408.90px;width:524.90px;height:1.00px;background:#e0e0e0;"></div>
<div style="left:654.40px;top:408.90px;width:214.30px;height:1.00px;background:#e0e0e0;"></div>
<div style="left:19.50px;top:424.50px;width:524.90px;height:1.00px;background:#e0e0e0;"></div>
<div style="left:654.40px;top:424.50px;width:214.30px;height:1.00px;background:#e0e0e0;"></div>
<div style="left:19.50px;top:440.10px;width:524.90px;height:1.00px;background:#e0e0e0;"></div>
<div style="left:654.40px;top:440.10px;width:214.30px;height:1.00px;background:#e0e0e0;"></div>
<div style="left:19.50px;top:455.60px;width:524.90px;height:1.00px;background:#e0e0e0;"></div>
<div style="left:654.40px;top:455.60px;width:214.30px;height:1.00px;background:#e0e0e0;"></div>
<div style="left:19.50px;top:470.80px;width:524.90px;height:1.00px;background:#e0e0e0;"></div>
<div style="left:654.40px;top:470.80px;width:214.30px;height:1.00px;background:#e0e0e0;"></div>
<div style="left:19.50px;top:486.30px;width:524.90px;height:1.00px;background:#e0e0e0;"></div>
<div style="left:654.40px;top:486.30px;width:214.30px;height:1.00px;background:#e0e0e0;"></div>
<div style="left:19.50px;top:501.60px;width:524.90px;height:1.00px;background:#e0e0e0;"></div>
<div style="left:654.40px;top:501.60px;width:214.30px;height:1.00px;background:#e0e0e0;"></div>
<div style="left:19.50px;top:517.00px;width:524.90px;height:1.00px;background:#e0e0e0;"></div>
<div style="left:654.40px;top:517.00px;width:214.30px;height:1.00px;background:#e0e0e0;"></div>
<div style="left:19.50px;top:564.90px;width:524.90px;height:1.00px;background:#e0e0e0;"></div>
<div style="left:654.40px;top:564.90px;width:214.30px;height:1.00px;background:#e0e0e0;"></div>
<div style="left:19.50px;top:580.00px;width:524.90px;height:1.00px;background:#e0e0e0;"></div>
<div style="left:654.40px;top:580.00px;width:214.30px;height:1.00px;background:#e0e0e0;"></div>
<div style="left:19.50px;top:594.50px;width:524.90px;height:1.00px;background:#e0e0e0;"></div>
<div style="left:654.40px;top:594.50px;width:214.30px;height:1.00px;background:#e0e0e0;"></div>
<div style="left:19.50px;top:609.30px;width:524.90px;height:1.00px;background:#e0e0e0;"></div>
<div style="left:654.40px;top:609.30px;width:214.30px;height:1.00px;background:#e0e0e0;"></div>
<div style="left:19.50px;top:624.10px;width:524.90px;height:1.00px;background:#e0e0e0;"></div>
<div style="left:654.40px;top:624.10px;width:214.30px;height:1.00px;background:#e0e0e0;"></div>
<div style="left:19.50px;top:638.50px;width:524.90px;height:1.00px;background:#e0e0e0;"></div>
<div style="left:654.40px;top:638.50px;width:214.30px;height:1.00px;background:#e0e0e0;"></div>
<div style="left:544.40px;top:564.90px;width:110.00px;height:1.00px;background:#e0e0e0;"></div>
<div style="left:868.70px;top:564.90px;width:165.10px;height:1.00px;background:#e0e0e0;"></div>
<div style="left:326.20px;top:174.30px;width:1.00px;height:140.30px;background:#e0e0e0;"></div>
<div style="left:326.20px;top:332.10px;width:1.00px;height:200.70px;background:#e0e0e0;"></div>
<div style="left:326.20px;top:548.00px;width:1.00px;height:91.00px;background:#e0e0e0;"></div>
<div style="left:380.80px;top:174.30px;width:1.00px;height:140.30px;background:#e0e0e0;"></div>
<div style="left:380.80px;top:332.10px;width:1.00px;height:200.70px;background:#e0e0e0;"></div>
<div style="left:380.80px;top:548.00px;width:1.00px;height:91.00px;background:#e0e0e0;"></div>
<div style="left:435.10px;top:174.30px;width:1.00px;height:140.30px;background:#e0e0e0;"></div>
<div style="left:435.10px;top:332.10px;width:1.00px;height:200.70px;background:#e0e0e0;"></div>
<div style="left:435.10px;top:548.00px;width:1.00px;height:91.00px;background:#e0e0e0;"></div>
<div style="left:489.10px;top:174.30px;width:1.00px;height:140.30px;background:#e0e0e0;"></div>
<div style="left:489.10px;top:332.10px;width:1.00px;height:200.70px;background:#e0e0e0;"></div>
<div style="left:489.10px;top:548.00px;width:1.00px;height:91.00px;background:#e0e0e0;"></div>
<div style="left:707.40px;top:174.30px;width:1.00px;height:140.30px;background:#e0e0e0;"></div>
<div style="left:707.40px;top:332.10px;width:1.00px;height:200.70px;background:#e0e0e0;"></div>
<div style="left:707.40px;top:548.00px;width:1.00px;height:91.00px;background:#e0e0e0;"></div>
<div style="left:761.10px;top:174.30px;width:1.00px;height:140.30px;background:#e0e0e0;"></div>
<div style="left:761.10px;top:332.10px;width:1.00px;height:200.70px;background:#e0e0e0;"></div>
<div style="left:761.10px;top:548.00px;width:1.00px;height:91.00px;background:#e0e0e0;"></div>
<div style="left:815.00px;top:174.30px;width:1.00px;height:140.30px;background:#e0e0e0;"></div>
<div style="left:815.00px;top:332.10px;width:1.00px;height:200.70px;background:#e0e0e0;"></div>
<div style="left:815.00px;top:548.00px;width:1.00px;height:91.00px;background:#e0e0e0;"></div>
<div style="left:19.50px;top:237.70px;width:1004.50px;height:1.00px;background:#a0a0a0;"></div>
<div style="left:543.85px;top:174.30px;width:1.10px;height:464.70px;background:#666;"></div>
<div style="left:653.85px;top:174.30px;width:1.10px;height:464.70px;background:#666;"></div>
<div style="left:868.15px;top:174.30px;width:1.10px;height:464.70px;background:#666;"></div>
<div style="left:598.80px;top:174.30px;width:1px;height:464.70px;background:repeating-linear-gradient(to bottom,#555 0,#555 2px,#b8b8b8 2px,#b8b8b8 3px);"></div>
<div style="left:923.20px;top:174.30px;width:1px;height:464.70px;background:repeating-linear-gradient(to bottom,#555 0,#555 2px,#b8b8b8 2px,#b8b8b8 3px);"></div>
<div style="left:978.30px;top:174.30px;width:1px;height:464.70px;background:repeating-linear-gradient(to bottom,#555 0,#555 2px,#b8b8b8 2px,#b8b8b8 3px);"></div>
</div>
<div id="hdrs">
<div style="left:0.00px;top:152.00px;width:1024.00px;height:22.30px;background:#e3e3e3;"></div>
<div style="left:0.00px;top:173.70px;width:1024.00px;height:1.20px;background:#b0b0b0;"></div>
<div style="left:0.00px;top:174.30px;width:19.50px;height:464.70px;background:#e3e3e3;"></div>
<div style="left:19.00px;top:161.00px;width:1.00px;height:478.00px;background:#bdbdbd;"></div>
<div class="ch" style="left:19.50px;top:159px;width:307.20px;height:15.30px;line-height:16.30px">A</div>
<div class="ch" style="left:326.70px;top:159px;width:54.60px;height:15.30px;line-height:16.30px">B</div>
<div style="left:326.20px;top:160.00px;width:1.00px;height:14.30px;background:#c4c4c4;"></div>
<div class="ch" style="left:381.30px;top:159px;width:54.30px;height:15.30px;line-height:16.30px">C</div>
<div style="left:380.80px;top:160.00px;width:1.00px;height:14.30px;background:#c4c4c4;"></div>
<div class="ch" style="left:435.60px;top:159px;width:54.00px;height:15.30px;line-height:16.30px">D</div>
<div style="left:435.10px;top:160.00px;width:1.00px;height:14.30px;background:#c4c4c4;"></div>
<div class="ch" style="left:489.60px;top:159px;width:54.80px;height:15.30px;line-height:16.30px">E</div>
<div style="left:489.10px;top:160.00px;width:1.00px;height:14.30px;background:#c4c4c4;"></div>
<div class="ch" style="left:544.40px;top:159px;width:54.90px;height:15.30px;line-height:16.30px">F</div>
<div style="left:543.90px;top:160.00px;width:1.00px;height:14.30px;background:#c4c4c4;"></div>
<div class="ch" style="left:599.30px;top:159px;width:55.10px;height:15.30px;line-height:16.30px">G</div>
<div style="left:598.80px;top:160.00px;width:1.00px;height:14.30px;background:#c4c4c4;"></div>
<div class="ch" style="left:654.40px;top:159px;width:53.50px;height:15.30px;line-height:16.30px">H</div>
<div style="left:653.90px;top:160.00px;width:1.00px;height:14.30px;background:#c4c4c4;"></div>
<div class="ch" style="left:707.90px;top:159px;width:53.70px;height:15.30px;line-height:16.30px">I</div>
<div style="left:707.40px;top:160.00px;width:1.00px;height:14.30px;background:#c4c4c4;"></div>
<div class="ch" style="left:761.60px;top:159px;width:53.90px;height:15.30px;line-height:16.30px">J</div>
<div style="left:761.10px;top:160.00px;width:1.00px;height:14.30px;background:#c4c4c4;"></div>
<div class="ch" style="left:815.50px;top:159px;width:53.20px;height:15.30px;line-height:16.30px">K</div>
<div style="left:815.00px;top:160.00px;width:1.00px;height:14.30px;background:#c4c4c4;"></div>
<div class="ch" style="left:868.70px;top:159px;width:55.00px;height:15.30px;line-height:16.30px">L</div>
<div style="left:868.20px;top:160.00px;width:1.00px;height:14.30px;background:#c4c4c4;"></div>
<div class="ch" style="left:923.70px;top:159px;width:55.10px;height:15.30px;line-height:16.30px">M</div>
<div style="left:923.20px;top:160.00px;width:1.00px;height:14.30px;background:#c4c4c4;"></div>
<div class="ch" style="left:978.80px;top:159px;width:55.00px;height:15.30px;line-height:16.30px">N</div>
<div style="left:978.30px;top:160.00px;width:1.00px;height:14.30px;background:#c4c4c4;"></div>
<div class="rh" style="left:0;top:174.30px;width:16.10px;height:17.30px;"><span>1</span></div>
<div style="left:0.00px;top:191.10px;width:19.50px;height:1.00px;background:#c4c4c4;"></div>
<div class="rh" style="left:0;top:191.60px;width:16.10px;height:14.60px;"><span>2</span></div>
<div style="left:0.00px;top:205.70px;width:19.50px;height:1.00px;background:#c4c4c4;"></div>
<div class="rh" style="left:0;top:206.20px;width:16.10px;height:17.20px;"><span>3</span></div>
<div style="left:0.00px;top:222.90px;width:19.50px;height:1.00px;background:#c4c4c4;"></div>
<div class="rh" style="left:0;top:223.40px;width:16.10px;height:14.80px;"><span>4</span></div>
<div style="left:0.00px;top:237.70px;width:19.50px;height:1.00px;background:#c4c4c4;"></div>
<div class="rh" style="left:0;top:238.20px;width:16.10px;height:17.80px;"><span>5</span></div>
<div style="left:0.00px;top:255.50px;width:19.50px;height:1.00px;background:#c4c4c4;"></div>
<div class="rh" style="left:0;top:256.00px;width:16.10px;height:14.60px;"><span>6</span></div>
<div style="left:0.00px;top:270.10px;width:19.50px;height:1.00px;background:#c4c4c4;"></div>
<div class="rh" style="left:0;top:270.60px;width:16.10px;height:14.80px;"><span>7</span></div>
<div style="left:0.00px;top:284.90px;width:19.50px;height:1.00px;background:#c4c4c4;"></div>
<div class="rh" style="left:0;top:285.40px;width:16.10px;height:14.20px;"><span>8</span></div>
<div style="left:0.00px;top:299.10px;width:19.50px;height:1.00px;background:#c4c4c4;"></div>
<div class="rh" style="left:0;top:299.60px;width:16.10px;height:15.00px;"><span>9</span></div>
<div style="left:0.00px;top:314.10px;width:19.50px;height:1.00px;background:#c4c4c4;"></div>
<div class="rh" style="left:0;top:314.60px;width:16.10px;height:17.50px;"><span>10</span></div>
<div style="left:0.00px;top:331.60px;width:19.50px;height:1.00px;background:#c4c4c4;"></div>
<div class="rh" style="left:0;top:332.10px;width:16.10px;height:28.50px;"><span>11</span></div>
<div style="left:0.00px;top:360.10px;width:19.50px;height:1.00px;background:#c4c4c4;"></div>
<div class="rh" style="left:0;top:360.60px;width:16.10px;height:14.80px;"><span>12</span></div>
<div style="left:0.00px;top:374.90px;width:19.50px;height:1.00px;background:#c4c4c4;"></div>
<div class="rh" style="left:0;top:375.40px;width:16.10px;height:17.30px;"><span>13</span></div>
<div style="left:0.00px;top:392.20px;width:19.50px;height:1.00px;background:#c4c4c4;"></div>
<div class="rh" style="left:0;top:392.70px;width:16.10px;height:16.70px;"><span>14</span></div>
<div style="left:0.00px;top:408.90px;width:19.50px;height:1.00px;background:#c4c4c4;"></div>
<div class="rh" style="left:0;top:409.40px;width:16.10px;height:15.60px;"><span>15</span></div>
<div style="left:0.00px;top:424.50px;width:19.50px;height:1.00px;background:#c4c4c4;"></div>
<div class="rh" style="left:0;top:425.00px;width:16.10px;height:15.60px;"><span>16</span></div>
<div style="left:0.00px;top:440.10px;width:19.50px;height:1.00px;background:#c4c4c4;"></div>
<div class="rh" style="left:0;top:440.60px;width:16.10px;height:15.50px;"><span>17</span></div>
<div style="left:0.00px;top:455.60px;width:19.50px;height:1.00px;background:#c4c4c4;"></div>
<div class="rh" style="left:0;top:456.10px;width:16.10px;height:15.20px;"><span>18</span></div>
<div style="left:0.00px;top:470.80px;width:19.50px;height:1.00px;background:#c4c4c4;"></div>
<div class="rh" style="left:0;top:471.30px;width:16.10px;height:15.50px;"><span>19</span></div>
<div style="left:0.00px;top:486.30px;width:19.50px;height:1.00px;background:#c4c4c4;"></div>
<div class="rh" style="left:0;top:486.80px;width:16.10px;height:15.30px;"><span>20</span></div>
<div style="left:0.00px;top:501.60px;width:19.50px;height:1.00px;background:#c4c4c4;"></div>
<div class="rh" style="left:0;top:502.10px;width:16.10px;height:15.40px;"><span>21</span></div>
<div style="left:0.00px;top:517.00px;width:19.50px;height:1.00px;background:#c4c4c4;"></div>
<div class="rh" style="left:0;top:517.50px;width:16.10px;height:15.30px;"><span>22</span></div>
<div style="left:0.00px;top:532.30px;width:19.50px;height:1.00px;background:#c4c4c4;"></div>
<div class="rh" style="left:0;top:532.80px;width:16.10px;height:15.20px;"><span>23</span></div>
<div style="left:0.00px;top:547.50px;width:19.50px;height:1.00px;background:#c4c4c4;"></div>
<div class="rh" style="left:0;top:548.00px;width:16.10px;height:17.40px;"><span>24</span></div>
<div style="left:0.00px;top:564.90px;width:19.50px;height:1.00px;background:#c4c4c4;"></div>
<div class="rh" style="left:0;top:565.40px;width:16.10px;height:15.10px;"><span>25</span></div>
<div style="left:0.00px;top:580.00px;width:19.50px;height:1.00px;background:#c4c4c4;"></div>
<div class="rh" style="left:0;top:580.50px;width:16.10px;height:14.50px;"><span>26</span></div>
<div style="left:0.00px;top:594.50px;width:19.50px;height:1.00px;background:#c4c4c4;"></div>
<div class="rh" style="left:0;top:595.00px;width:16.10px;height:14.80px;"><span>27</span></div>
<div style="left:0.00px;top:609.30px;width:19.50px;height:1.00px;background:#c4c4c4;"></div>
<div class="rh" style="left:0;top:609.80px;width:16.10px;height:14.80px;"><span>28</span></div>
<div style="left:0.00px;top:624.10px;width:19.50px;height:1.00px;background:#c4c4c4;"></div>
<div class="rh" style="left:0;top:624.60px;width:16.10px;height:14.40px;"><span>29</span></div>
<div style="left:0.00px;top:638.50px;width:19.50px;height:1.00px;background:#c4c4c4;"></div>
<svg style="left:6px;top:161px" width="12" height="12" viewBox="0 0 12 12"><path d="M10.6 2.2 L10.6 11 L1.8 11 Z" fill="#b4b4b4"/></svg>
</div>
<div id="cells">
<div class="c b" style="left:19.50px;top:175.00px;width:307.20px;height:17.30px;text-align:left;color:#ff0000;font-size:13px;"><span>CHURCH NAME</span></div>
<div class="c b" style="left:19.50px;top:191.90px;width:307.20px;height:14.60px;text-align:center;color:#2b579a;font-size:11px;"><span>2018 Attendance Figures</span></div>
<div class="c b" style="left:19.50px;top:237.80px;width:307.20px;height:17.80px;text-align:left;color:#c0504d;font-size:13.25px;text-decoration:underline;"><span>SUNDAY MORNING SERVICES:</span></div>
<div class="c " style="left:19.50px;top:256.30px;width:307.20px;height:14.60px;text-align:left;"><span>9.30am Service</span></div>
<div class="c " style="left:19.50px;top:270.90px;width:307.20px;height:14.80px;text-align:left;"><span>11am Service</span></div>
<div class="c " style="left:19.50px;top:285.70px;width:307.20px;height:14.20px;text-align:left;padding-left:12.3px;"><span>Cry Room - 9.30am</span></div>
<div class="c " style="left:19.50px;top:299.90px;width:307.20px;height:15.00px;text-align:left;padding-left:12.3px;"><span>Cry Room - 11am</span></div>
<div class="c b" style="left:19.50px;top:314.90px;width:307.20px;height:17.50px;text-align:center;color:#1f497d;font-size:13.7px;padding-right:5px;box-sizing:border-box;"><span>TOTALS:</span></div>
<div class="c b" style="left:19.50px;top:325.80px;width:307.20px;height:28.50px;text-align:left;color:#c0504d;font-size:13.15px;text-decoration:underline;"><span>SPECIAL EVENTS</span></div>
<div class="c b i" style="left:19.50px;top:360.80px;width:307.20px;height:14.80px;text-align:left;color:#24508c;font-size:10.85px;padding-left:12.3px;"><span>Special Services/Events Attendance Figure</span></div>
<div class="c b" style="left:19.50px;top:375.70px;width:307.20px;height:17.30px;text-align:left;color:#c0504d;font-size:13.25px;text-decoration:underline;"><span>MID-WEEK/OTHER ACTIVITIES/SERVICES:</span></div>
<div class="c " style="left:19.50px;top:394.10px;width:307.20px;height:16.70px;text-align:left;color:#2a5590;font-size:13.25px;"><span>Worship Practice</span></div>
<div class="c " style="left:19.50px;top:411.00px;width:307.20px;height:15.60px;text-align:left;color:#2a5590;font-size:12px;"><span>Home Group Attendance</span></div>
<div class="c " style="left:19.50px;top:426.60px;width:307.20px;height:15.60px;text-align:left;color:#2a5590;font-size:12px;"><span>Kids Club Program</span></div>
<div class="c " style="left:19.50px;top:442.20px;width:307.20px;height:15.50px;text-align:left;color:#2a5590;font-size:12px;"><span>Men's Event</span></div>
<div class="c " style="left:19.50px;top:457.70px;width:307.20px;height:15.20px;text-align:left;color:#2a5590;font-size:12px;"><span>Outreach Meals</span></div>
<div class="c " style="left:19.50px;top:472.90px;width:307.20px;height:15.50px;text-align:left;color:#2a5590;font-size:12px;"><span>Playgroup</span></div>
<div class="c " style="left:19.50px;top:488.40px;width:307.20px;height:15.30px;text-align:left;color:#2a5590;font-size:12px;"><span>Prayer Meeting</span></div>
<div class="c " style="left:19.50px;top:503.70px;width:307.20px;height:15.40px;text-align:left;color:#2a5590;font-size:12px;"><span>Women's Event</span></div>
<div class="c " style="left:19.50px;top:519.10px;width:307.20px;height:15.30px;text-align:left;color:#2a5590;font-size:12px;"><span>Youth Group</span></div>
<div class="c b" style="left:19.50px;top:547.70px;width:307.20px;height:17.40px;text-align:left;color:#c0504d;font-size:13.25px;text-decoration:underline;"><span>SUNDAY SCHOOL:</span></div>
<div class="c " style="left:19.50px;top:565.10px;width:307.20px;height:15.10px;text-align:left;color:#2a5590;font-size:11.2px;"><span>Pre-School</span></div>
<div class="c " style="left:19.50px;top:580.20px;width:307.20px;height:14.50px;text-align:left;color:#2a5590;font-size:11.2px;"><span>Kindergarten</span></div>
<div class="c " style="left:19.50px;top:594.70px;width:307.20px;height:14.80px;text-align:left;color:#2a5590;font-size:11.2px;"><span>Reception - Year 2</span></div>
<div class="c " style="left:19.50px;top:609.50px;width:307.20px;height:14.80px;text-align:left;color:#2a5590;font-size:11.2px;"><span>Year 3-5</span></div>
<div class="c " style="left:19.50px;top:625.20px;width:307.20px;height:14.40px;text-align:left;color:#2a5590;font-size:11.2px;"><span>Year 6-7</span></div>
<div class="c b" style="left:326.70px;top:223.40px;width:54.60px;height:14.80px;text-align:center;"><span>Jan 7</span></div>
<div class="c b" style="left:381.30px;top:223.40px;width:54.30px;height:14.80px;text-align:center;"><span>Jan 14</span></div>
<div class="c b" style="left:435.60px;top:223.40px;width:54.00px;height:14.80px;text-align:center;"><span>Jan 21</span></div>
<div class="c b" style="left:489.60px;top:223.40px;width:54.80px;height:14.80px;text-align:center;"><span>Jan 28</span></div>
<div class="c b" style="left:654.40px;top:223.40px;width:53.50px;height:14.80px;text-align:center;"><span>Feb 4</span></div>
<div class="c b" style="left:707.90px;top:223.40px;width:53.70px;height:14.80px;text-align:center;"><span>Feb 11</span></div>
<div class="c b" style="left:761.60px;top:223.40px;width:53.90px;height:14.80px;text-align:center;"><span>Feb 18</span></div>
<div class="c b" style="left:815.50px;top:223.40px;width:53.20px;height:14.80px;text-align:center;"><span>Feb 25</span></div>
<div class="c b two" style="left:544.40px;top:206.80px;width:54.90px;height:32.00px;text-align:center;"><span>January<br>Totals</span></div>
<div class="c b two" style="left:599.30px;top:206.80px;width:55.10px;height:32.00px;text-align:center;"><span>YTD<br>Average</span></div>
<div class="c b two" style="left:868.70px;top:206.80px;width:55.00px;height:32.00px;text-align:center;"><span>February<br>Totals</span></div>
<div class="c b two" style="left:923.70px;top:206.80px;width:55.10px;height:32.00px;text-align:center;"><span>February<br>Average</span></div>
<div class="c b two" style="left:978.80px;top:206.80px;width:55.00px;height:32.00px;text-align:center;"><span>2 month<br>Total</span></div>
<div class="c " style="left:326.70px;top:256.30px;width:54.60px;height:14.60px;text-align:center;"><span>1</span></div>
<div class="c " style="left:381.30px;top:256.30px;width:54.30px;height:14.60px;text-align:center;"><span>1</span></div>
<div class="c " style="left:435.60px;top:256.30px;width:54.00px;height:14.60px;text-align:center;"><span>1</span></div>
<div class="c " style="left:489.60px;top:256.30px;width:54.80px;height:14.60px;text-align:center;"><span>1</span></div>
<div class="c " style="left:544.40px;top:256.30px;width:54.90px;height:14.60px;text-align:center;"><span>4</span></div>
<div class="c b" style="left:599.30px;top:256.30px;width:55.10px;height:14.60px;text-align:center;"><span>1.0</span></div>
<div class="c " style="left:654.40px;top:256.30px;width:53.50px;height:14.60px;text-align:center;"><span>1</span></div>
<div class="c " style="left:707.90px;top:256.30px;width:53.70px;height:14.60px;text-align:center;"><span>1</span></div>
<div class="c " style="left:761.60px;top:256.30px;width:53.90px;height:14.60px;text-align:center;"><span>1</span></div>
<div class="c " style="left:815.50px;top:256.30px;width:53.20px;height:14.60px;text-align:center;"><span>1</span></div>
<div class="c " style="left:868.70px;top:256.30px;width:55.00px;height:14.60px;text-align:center;"><span>4</span></div>
<div class="c " style="left:923.70px;top:256.30px;width:55.10px;height:14.60px;text-align:center;"><span>1.0</span></div>
<div class="c " style="left:978.80px;top:256.30px;width:55.00px;height:14.60px;text-align:center;"><span>8</span></div>
<div class="c " style="left:326.70px;top:270.90px;width:54.60px;height:14.80px;text-align:center;"><span>2</span></div>
<div class="c " style="left:381.30px;top:270.90px;width:54.30px;height:14.80px;text-align:center;"><span>2</span></div>
<div class="c " style="left:435.60px;top:270.90px;width:54.00px;height:14.80px;text-align:center;"><span>2</span></div>
<div class="c " style="left:489.60px;top:270.90px;width:54.80px;height:14.80px;text-align:center;"><span>2</span></div>
<div class="c " style="left:544.40px;top:270.90px;width:54.90px;height:14.80px;text-align:center;"><span>8</span></div>
<div class="c b" style="left:599.30px;top:270.90px;width:55.10px;height:14.80px;text-align:center;"><span>2.0</span></div>
<div class="c " style="left:654.40px;top:270.90px;width:53.50px;height:14.80px;text-align:center;"><span>2</span></div>
<div class="c " style="left:707.90px;top:270.90px;width:53.70px;height:14.80px;text-align:center;"><span>2</span></div>
<div class="c " style="left:761.60px;top:270.90px;width:53.90px;height:14.80px;text-align:center;"><span>2</span></div>
<div class="c " style="left:815.50px;top:270.90px;width:53.20px;height:14.80px;text-align:center;"><span>2</span></div>
<div class="c " style="left:868.70px;top:270.90px;width:55.00px;height:14.80px;text-align:center;"><span>8</span></div>
<div class="c " style="left:923.70px;top:270.90px;width:55.10px;height:14.80px;text-align:center;"><span>2.0</span></div>
<div class="c " style="left:978.80px;top:270.90px;width:55.00px;height:14.80px;text-align:center;"><span>16</span></div>
<div class="c " style="left:326.70px;top:285.70px;width:54.60px;height:14.20px;text-align:center;"><span>3</span></div>
<div class="c " style="left:381.30px;top:285.70px;width:54.30px;height:14.20px;text-align:center;"><span>3</span></div>
<div class="c " style="left:435.60px;top:285.70px;width:54.00px;height:14.20px;text-align:center;"><span>3</span></div>
<div class="c " style="left:489.60px;top:285.70px;width:54.80px;height:14.20px;text-align:center;"><span>3</span></div>
<div class="c " style="left:544.40px;top:285.70px;width:54.90px;height:14.20px;text-align:center;"><span>12</span></div>
<div class="c b" style="left:599.30px;top:285.70px;width:55.10px;height:14.20px;text-align:center;"><span>3.0</span></div>
<div class="c " style="left:654.40px;top:285.70px;width:53.50px;height:14.20px;text-align:center;"><span>3</span></div>
<div class="c " style="left:707.90px;top:285.70px;width:53.70px;height:14.20px;text-align:center;"><span>3</span></div>
<div class="c " style="left:761.60px;top:285.70px;width:53.90px;height:14.20px;text-align:center;"><span>3</span></div>
<div class="c " style="left:815.50px;top:285.70px;width:53.20px;height:14.20px;text-align:center;"><span>3</span></div>
<div class="c " style="left:868.70px;top:285.70px;width:55.00px;height:14.20px;text-align:center;"><span>12</span></div>
<div class="c " style="left:923.70px;top:285.70px;width:55.10px;height:14.20px;text-align:center;"><span>3.0</span></div>
<div class="c " style="left:978.80px;top:285.70px;width:55.00px;height:14.20px;text-align:center;"><span>24</span></div>
<div class="c " style="left:326.70px;top:299.90px;width:54.60px;height:15.00px;text-align:center;"><span>4</span></div>
<div class="c " style="left:381.30px;top:299.90px;width:54.30px;height:15.00px;text-align:center;"><span>4</span></div>
<div class="c " style="left:435.60px;top:299.90px;width:54.00px;height:15.00px;text-align:center;"><span>4</span></div>
<div class="c " style="left:489.60px;top:299.90px;width:54.80px;height:15.00px;text-align:center;"><span>4</span></div>
<div class="c " style="left:544.40px;top:299.90px;width:54.90px;height:15.00px;text-align:center;"><span>16</span></div>
<div class="c b" style="left:599.30px;top:299.90px;width:55.10px;height:15.00px;text-align:center;"><span>4.0</span></div>
<div class="c " style="left:654.40px;top:299.90px;width:53.50px;height:15.00px;text-align:center;"><span>4</span></div>
<div class="c " style="left:707.90px;top:299.90px;width:53.70px;height:15.00px;text-align:center;"><span>4</span></div>
<div class="c " style="left:761.60px;top:299.90px;width:53.90px;height:15.00px;text-align:center;"><span>4</span></div>
<div class="c " style="left:815.50px;top:299.90px;width:53.20px;height:15.00px;text-align:center;"><span>4</span></div>
<div class="c " style="left:868.70px;top:299.90px;width:55.00px;height:15.00px;text-align:center;"><span>16</span></div>
<div class="c " style="left:923.70px;top:299.90px;width:55.10px;height:15.00px;text-align:center;"><span>4.0</span></div>
<div class="c " style="left:978.80px;top:299.90px;width:55.00px;height:15.00px;text-align:center;"><span>32</span></div>
<div class="c b" style="left:326.70px;top:314.90px;width:54.60px;height:17.50px;text-align:center;"><span>10</span></div>
<div class="c b" style="left:381.30px;top:314.90px;width:54.30px;height:17.50px;text-align:center;"><span>10</span></div>
<div class="c b" style="left:435.60px;top:314.90px;width:54.00px;height:17.50px;text-align:center;"><span>10</span></div>
<div class="c b" style="left:489.60px;top:314.90px;width:54.80px;height:17.50px;text-align:center;"><span>10</span></div>
<div class="c b" style="left:544.40px;top:314.90px;width:54.90px;height:17.50px;text-align:center;"><span>40</span></div>
<div class="c b" style="left:599.30px;top:314.90px;width:55.10px;height:17.50px;text-align:center;"><span>10.0</span></div>
<div class="c b" style="left:654.40px;top:314.90px;width:53.50px;height:17.50px;text-align:center;"><span>10</span></div>
<div class="c b" style="left:707.90px;top:314.90px;width:53.70px;height:17.50px;text-align:center;"><span>10</span></div>
<div class="c b" style="left:761.60px;top:314.90px;width:53.90px;height:17.50px;text-align:center;"><span>10</span></div>
<div class="c b" style="left:815.50px;top:314.90px;width:53.20px;height:17.50px;text-align:center;"><span>10</span></div>
<div class="c b" style="left:868.70px;top:314.90px;width:55.00px;height:17.50px;text-align:center;"><span>40</span></div>
<div class="c b" style="left:923.70px;top:314.90px;width:55.10px;height:17.50px;text-align:center;"><span>10.0</span></div>
<div class="c b" style="left:978.80px;top:314.90px;width:55.00px;height:17.50px;text-align:center;"><span>80</span></div>
<div class="c " style="left:326.70px;top:409.70px;width:54.60px;height:15.60px;text-align:center;"><span>6</span></div>
<div class="c " style="left:381.30px;top:409.70px;width:54.30px;height:15.60px;text-align:center;"><span>9</span></div>
<div class="c " style="left:435.60px;top:409.70px;width:54.00px;height:15.60px;text-align:center;"><span>4</span></div>
<div class="c " style="left:489.60px;top:409.70px;width:54.80px;height:15.60px;text-align:center;"><span>2</span></div>
<div class="c " style="left:544.40px;top:409.70px;width:54.90px;height:15.60px;text-align:center;"><span>21</span></div>
<div class="c b" style="left:599.30px;top:409.70px;width:55.10px;height:15.60px;text-align:center;"><span>5.3</span></div>
<div class="c " style="left:654.40px;top:409.70px;width:53.50px;height:15.60px;text-align:center;"><span>6</span></div>
<div class="c " style="left:707.90px;top:409.70px;width:53.70px;height:15.60px;text-align:center;"><span>6</span></div>
<div class="c " style="left:761.60px;top:409.70px;width:53.90px;height:15.60px;text-align:center;"><span>7</span></div>
<div class="c " style="left:815.50px;top:409.70px;width:53.20px;height:15.60px;text-align:center;"><span>13</span></div>
<div class="c " style="left:868.70px;top:409.70px;width:55.00px;height:15.60px;text-align:center;"><span>32</span></div>
<div class="c " style="left:923.70px;top:409.70px;width:55.10px;height:15.60px;text-align:center;"><span>8.0</span></div>
<div class="c " style="left:435.60px;top:425.30px;width:54.00px;height:15.60px;text-align:center;"><span>35</span></div>
<div class="c " style="left:544.40px;top:425.30px;width:54.90px;height:15.60px;text-align:center;"><span>35</span></div>
<div class="c b" style="left:599.30px;top:425.30px;width:55.10px;height:15.60px;text-align:center;"><span>35.0</span></div>
<div class="c " style="left:707.90px;top:425.30px;width:53.70px;height:15.60px;text-align:center;"><span>25</span></div>
<div class="c " style="left:761.60px;top:425.30px;width:53.90px;height:15.60px;text-align:center;"><span>35</span></div>
<div class="c " style="left:815.50px;top:425.30px;width:53.20px;height:15.60px;text-align:center;"><span>53</span></div>
<div class="c " style="left:868.70px;top:425.30px;width:55.00px;height:15.60px;text-align:center;"><span>113</span></div>
<div class="c " style="left:923.70px;top:425.30px;width:55.10px;height:15.60px;text-align:center;"><span>37.7</span></div>
<div class="c " style="left:435.60px;top:440.90px;width:54.00px;height:15.50px;text-align:center;"><span>9</span></div>
<div class="c " style="left:544.40px;top:440.90px;width:54.90px;height:15.50px;text-align:center;"><span>9</span></div>
<div class="c b" style="left:599.30px;top:440.90px;width:55.10px;height:15.50px;text-align:center;"><span>9.0</span></div>
<div class="c " style="left:654.40px;top:440.90px;width:53.50px;height:15.50px;text-align:center;"><span>7</span></div>
<div class="c " style="left:761.60px;top:440.90px;width:53.90px;height:15.50px;text-align:center;"><span>9</span></div>
<div class="c " style="left:868.70px;top:440.90px;width:55.00px;height:15.50px;text-align:center;"><span>16</span></div>
<div class="c " style="left:923.70px;top:440.90px;width:55.10px;height:15.50px;text-align:center;"><span>8.0</span></div>
<div class="c " style="left:435.60px;top:456.40px;width:54.00px;height:15.20px;text-align:center;"><span>8</span></div>
<div class="c " style="left:489.60px;top:456.40px;width:54.80px;height:15.20px;text-align:center;"><span>8</span></div>
<div class="c " style="left:544.40px;top:456.40px;width:54.90px;height:15.20px;text-align:center;"><span>16</span></div>
<div class="c b" style="left:599.30px;top:456.40px;width:55.10px;height:15.20px;text-align:center;"><span>8.0</span></div>
<div class="c " style="left:654.40px;top:456.40px;width:53.50px;height:15.20px;text-align:center;"><span>5</span></div>
<div class="c " style="left:707.90px;top:456.40px;width:53.70px;height:15.20px;text-align:center;"><span>7</span></div>
<div class="c " style="left:761.60px;top:456.40px;width:53.90px;height:15.20px;text-align:center;"><span>7</span></div>
<div class="c " style="left:815.50px;top:456.40px;width:53.20px;height:15.20px;text-align:center;"><span>6</span></div>
<div class="c " style="left:868.70px;top:456.40px;width:55.00px;height:15.20px;text-align:center;"><span>25</span></div>
<div class="c " style="left:923.70px;top:456.40px;width:55.10px;height:15.20px;text-align:center;"><span>6.3</span></div>
<div class="c " style="left:326.70px;top:565.70px;width:54.60px;height:15.10px;text-align:center;"><span>1</span></div>
<div class="c " style="left:381.30px;top:565.70px;width:54.30px;height:15.10px;text-align:center;"><span>1</span></div>
<div class="c " style="left:435.60px;top:565.70px;width:54.00px;height:15.10px;text-align:center;"><span>1</span></div>
<div class="c " style="left:489.60px;top:565.70px;width:54.80px;height:15.10px;text-align:center;"><span>1</span></div>
<div class="c " style="left:544.40px;top:565.70px;width:54.90px;height:15.10px;text-align:center;"><span>4</span></div>
<div class="c b" style="left:599.30px;top:565.70px;width:55.10px;height:15.10px;text-align:center;"><span>1.0</span></div>
<div class="c " style="left:654.40px;top:565.70px;width:53.50px;height:15.10px;text-align:center;"><span>1</span></div>
<div class="c " style="left:707.90px;top:565.70px;width:53.70px;height:15.10px;text-align:center;"><span>1</span></div>
<div class="c " style="left:761.60px;top:565.70px;width:53.90px;height:15.10px;text-align:center;"><span>1</span></div>
<div class="c " style="left:815.50px;top:565.70px;width:53.20px;height:15.10px;text-align:center;"><span>1</span></div>
<div class="c " style="left:868.70px;top:565.70px;width:55.00px;height:15.10px;text-align:center;"><span>4</span></div>
<div class="c " style="left:923.70px;top:565.70px;width:55.10px;height:15.10px;text-align:center;"><span>1.0</span></div>
<div class="c " style="left:978.80px;top:565.70px;width:55.00px;height:15.10px;text-align:center;"><span>8</span></div>
<div class="c " style="left:326.70px;top:580.80px;width:54.60px;height:14.50px;text-align:center;"><span>2</span></div>
<div class="c " style="left:381.30px;top:580.80px;width:54.30px;height:14.50px;text-align:center;"><span>2</span></div>
<div class="c " style="left:435.60px;top:580.80px;width:54.00px;height:14.50px;text-align:center;"><span>2</span></div>
<div class="c " style="left:489.60px;top:580.80px;width:54.80px;height:14.50px;text-align:center;"><span>2</span></div>
<div class="c " style="left:544.40px;top:580.80px;width:54.90px;height:14.50px;text-align:center;"><span>8</span></div>
<div class="c b" style="left:599.30px;top:580.80px;width:55.10px;height:14.50px;text-align:center;"><span>2.0</span></div>
<div class="c " style="left:654.40px;top:580.80px;width:53.50px;height:14.50px;text-align:center;"><span>2</span></div>
<div class="c " style="left:707.90px;top:580.80px;width:53.70px;height:14.50px;text-align:center;"><span>2</span></div>
<div class="c " style="left:761.60px;top:580.80px;width:53.90px;height:14.50px;text-align:center;"><span>2</span></div>
<div class="c " style="left:815.50px;top:580.80px;width:53.20px;height:14.50px;text-align:center;"><span>2</span></div>
<div class="c " style="left:868.70px;top:580.80px;width:55.00px;height:14.50px;text-align:center;"><span>8</span></div>
<div class="c " style="left:923.70px;top:580.80px;width:55.10px;height:14.50px;text-align:center;"><span>2.0</span></div>
<div class="c " style="left:978.80px;top:580.80px;width:55.00px;height:14.50px;text-align:center;"><span>16</span></div>
<div class="c " style="left:326.70px;top:595.30px;width:54.60px;height:14.80px;text-align:center;"><span>3</span></div>
<div class="c " style="left:381.30px;top:595.30px;width:54.30px;height:14.80px;text-align:center;"><span>3</span></div>
<div class="c " style="left:435.60px;top:595.30px;width:54.00px;height:14.80px;text-align:center;"><span>3</span></div>
<div class="c " style="left:489.60px;top:595.30px;width:54.80px;height:14.80px;text-align:center;"><span>3</span></div>
<div class="c " style="left:654.40px;top:595.30px;width:53.50px;height:14.80px;text-align:center;"><span>3</span></div>
<div class="c " style="left:707.90px;top:595.30px;width:53.70px;height:14.80px;text-align:center;"><span>3</span></div>
<div class="c " style="left:761.60px;top:595.30px;width:53.90px;height:14.80px;text-align:center;"><span>3</span></div>
<div class="c " style="left:815.50px;top:595.30px;width:53.20px;height:14.80px;text-align:center;"><span>3</span></div>
<div class="c " style="left:326.70px;top:610.10px;width:54.60px;height:14.80px;text-align:center;"><span>4</span></div>
<div class="c " style="left:381.30px;top:610.10px;width:54.30px;height:14.80px;text-align:center;"><span>4</span></div>
<div class="c " style="left:435.60px;top:610.10px;width:54.00px;height:14.80px;text-align:center;"><span>4</span></div>
<div class="c " style="left:489.60px;top:610.10px;width:54.80px;height:14.80px;text-align:center;"><span>4</span></div>
<div class="c " style="left:544.40px;top:610.10px;width:54.90px;height:14.80px;text-align:center;"><span>16</span></div>
<div class="c b" style="left:599.30px;top:610.10px;width:55.10px;height:14.80px;text-align:center;"><span>4.0</span></div>
<div class="c " style="left:654.40px;top:610.10px;width:53.50px;height:14.80px;text-align:center;"><span>4</span></div>
<div class="c " style="left:707.90px;top:610.10px;width:53.70px;height:14.80px;text-align:center;"><span>4</span></div>
<div class="c " style="left:761.60px;top:610.10px;width:53.90px;height:14.80px;text-align:center;"><span>4</span></div>
<div class="c " style="left:815.50px;top:610.10px;width:53.20px;height:14.80px;text-align:center;"><span>4</span></div>
<div class="c " style="left:868.70px;top:610.10px;width:55.00px;height:14.80px;text-align:center;"><span>16</span></div>
<div class="c " style="left:923.70px;top:610.10px;width:55.10px;height:14.80px;text-align:center;"><span>4.0</span></div>
<div class="c " style="left:978.80px;top:610.10px;width:55.00px;height:14.80px;text-align:center;"><span>32</span></div>
<div class="c " style="left:326.70px;top:624.90px;width:54.60px;height:14.40px;text-align:center;"><span>5</span></div>
<div class="c " style="left:381.30px;top:624.90px;width:54.30px;height:14.40px;text-align:center;"><span>5</span></div>
<div class="c " style="left:435.60px;top:624.90px;width:54.00px;height:14.40px;text-align:center;"><span>5</span></div>
<div class="c " style="left:489.60px;top:624.90px;width:54.80px;height:14.40px;text-align:center;"><span>5</span></div>
<div class="c " style="left:544.40px;top:624.90px;width:54.90px;height:14.40px;text-align:center;"><span>20</span></div>
<div class="c b" style="left:599.30px;top:624.90px;width:55.10px;height:14.40px;text-align:center;"><span>5.0</span></div>
<div class="c " style="left:654.40px;top:624.90px;width:53.50px;height:14.40px;text-align:center;"><span>5</span></div>
<div class="c " style="left:707.90px;top:624.90px;width:53.70px;height:14.40px;text-align:center;"><span>5</span></div>
<div class="c " style="left:761.60px;top:624.90px;width:53.90px;height:14.40px;text-align:center;"><span>5</span></div>
<div class="c " style="left:815.50px;top:624.90px;width:53.20px;height:14.40px;text-align:center;"><span>5</span></div>
<div class="c " style="left:868.70px;top:624.90px;width:55.00px;height:14.40px;text-align:center;"><span>20</span></div>
<div class="c " style="left:923.70px;top:624.90px;width:55.10px;height:14.40px;text-align:center;"><span>5.0</span></div>
<div class="c " style="left:978.80px;top:624.90px;width:55.00px;height:14.40px;text-align:center;"><span>40</span></div>
<div class="c i" style="left:761.60px;top:323.80px;width:53.90px;height:28.50px;text-align:center;font-size:8.3px;color:#333;"><span>Outreach</span></div>
<div class="c " style="left:761.60px;top:360.90px;width:53.90px;height:14.80px;text-align:center;"><span>1</span></div>
</div>
<div id="bottom">
<div style="left:0.00px;top:639.00px;width:1024.00px;height:19.00px;background:#e3e3e3;"></div>
<div style="left:0.00px;top:639.00px;width:1024.00px;height:1.00px;background:#c6c6c6;"></div>
<svg style="left:15.00px;top:644.50px;" width="6" height="8" viewBox="0 0 6 8"><path d="M4.6 0.8 L1.2 4 L4.6 7.2 Z" fill="#c2c2c2"/></svg>
<svg style="left:34.00px;top:644.50px;" width="6" height="8" viewBox="0 0 6 8"><path d="M1.4 0.8 L4.8 4 L1.4 7.2 Z" fill="#c2c2c2"/></svg>
<div style="left:66.00px;top:639.00px;width:43.30px;height:17.00px;background:#fff;"></div>
<div style="left:66.00px;top:654.60px;width:43.30px;height:1.50px;background:#217346;"></div>
<div style="left:109.30px;top:639.50px;width:1.00px;height:16.00px;background:#c6c6c6;"></div>
<div class="t" style="white-space:pre;left:74.00px;top:639.04px;font-size:11.6px;line-height:13.92px;letter-spacing:0.349px;color:#217346;font-weight:bold;">2018</div>
<div class="t" style="white-space:pre;left:118.20px;top:640.36px;font-size:11.4px;line-height:13.68px;letter-spacing:-0.239px;color:#505050;">2019</div>
<div style="left:151.20px;top:642.00px;width:1.00px;height:13.50px;background:#a8a8a8;"></div>
<svg style="left:173.40px;top:641.60px;" width="14" height="14" viewBox="0 0 14 14"><circle cx="7" cy="7" r="6.1" fill="none" stroke="#666" stroke-width="0.9"/><path d="M3.8 7 H10.2 M7 3.8 V10.2" stroke="#666" stroke-width="0.9"/></svg>
<div style="left:766.60px;top:644.50px;width:1.20px;height:1.20px;background:#a0a0a0;"></div>
<div style="left:766.60px;top:647.50px;width:1.20px;height:1.20px;background:#a0a0a0;"></div>
<div style="left:766.60px;top:650.50px;width:1.20px;height:1.20px;background:#a0a0a0;"></div>
<div style="left:870.80px;top:640.00px;width:153.20px;height:14.80px;background:#f1f1f1;"></div>
<div style="left:778.00px;top:642.30px;width:93.00px;height:12.30px;background:#fff;border:1px solid #ababab;box-sizing:border-box;"></div>
<div style="left:790.80px;top:642.30px;width:1.00px;height:12.30px;background:#ababab;"></div>
<svg style="left:781.40px;top:645.00px;" width="6" height="7" viewBox="0 0 6 7"><path d="M4.8 0.4 L1 3.5 L4.8 6.6 Z" fill="#222"/></svg>
<div style="left:0.00px;top:657.60px;width:1024.00px;height:17.40px;background:#f3f3f3;"></div>
<div style="left:0.00px;top:657.60px;width:1024.00px;height:0.80px;background:#d8d8d8;"></div>
<div class="t" style="white-space:pre;left:6.20px;top:661.96px;font-size:9.4px;line-height:11.28px;letter-spacing:-0.594px;color:#555;">Ready</div>
<svg style="left:47.50px;top:661.50px;" width="11" height="11" viewBox="0 0 11 11"><rect x="0.6" y="2.6" width="9.6" height="7.6" fill="#fff" stroke="#666" stroke-width="0.9"/><path d="M0.6 5.2 H10.2 M0.6 7.6 H10.2" stroke="#666" stroke-width="0.8"/><circle cx="2.6" cy="1.8" r="1.7" fill="#444"/><path d="M5 2.2 H10.2" stroke="#444" stroke-width="1.2"/></svg>
<svg style="left:72.50px;top:661.00px;" width="15" height="14" viewBox="0 0 15 14"><path d="M5.6 1.4 C1.6 2.4 0.6 7 3.2 9.4" fill="none" stroke="#666" stroke-width="0.9"/><path d="M6.6 3 V7.6 M4.6 5.4 H8.8" stroke="#555" stroke-width="0.9"/><path d="M7 8 L12.6 12.8 M12.6 8 L7 12.8" stroke="#333" stroke-width="1.3"/></svg>
<div class="t" style="white-space:pre;left:89.00px;top:662.02px;font-size:9.3px;line-height:11.16px;letter-spacing:-0.374px;color:#333;font-weight:bold;">Accessibility: Investigate</div>
</div>
</body></html>
